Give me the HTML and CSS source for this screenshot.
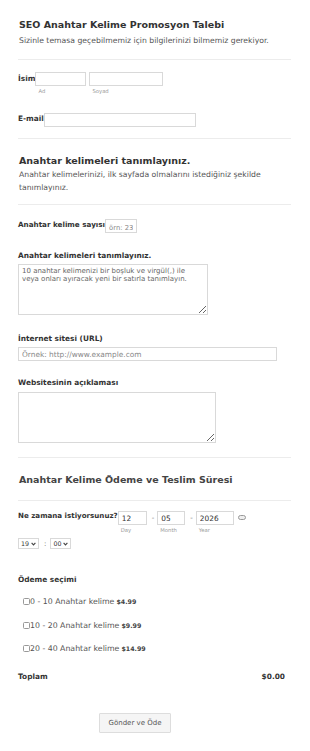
FILE: index.html
```html
<!DOCTYPE html>
<html lang="tr">
<head>
<meta charset="utf-8">
<link rel="stylesheet" href="styles.css">
</head>
<body>
<form class="form">
  <div class="head">
    <h1 class="title">SEO Anahtar Kelime Promosyon Talebi</h1>
    <p class="desc">Sizinle temasa geçebilmemiz için bilgilerinizi bilmemiz gerekiyor.</p>
  </div>
  <div class="rule"></div>

  <div class="row row-name">
    <label class="lbl">İsim</label>
    <div class="sub">
      <input class="in w-ad" type="text">
      <span class="hint">Ad</span>
    </div>
    <div class="sub">
      <input class="in w-soyad" type="text">
      <span class="hint">Soyad</span>
    </div>
  </div>

  <div class="row row-email">
    <label class="lbl">E-mail</label>
    <input class="in w-email" type="text">
  </div>
  <div class="rule rule-b"></div>

  <div class="head head-2">
    <h2 class="title">Anahtar kelimeleri tanımlayınız.</h2>
    <p class="desc">Anahtar kelimelerinizi, ilk sayfada olmalarını istediğiniz şekilde tanımlayınız.</p>
  </div>
  <div class="rule rule-c"></div>

  <div class="row row-count">
    <label class="lbl">Anahtar kelime sayısı</label>
    <input class="in w-count low" type="text" placeholder="örn: 23">
  </div>

  <div class="block block-kw">
    <label class="lbl">Anahtar kelimeleri tanımlayınız.</label>
    <textarea class="ta w-ta1" placeholder="10 anahtar kelimenizi bir boşluk ve virgül(,) ile veya onları ayıracak yeni bir satırla tanımlayın."></textarea>
  </div>

  <div class="block block-url">
    <label class="lbl">İnternet sitesi (URL)</label>
    <input class="in w-url" type="text" placeholder="Örnek: http://www.example.com">
  </div>

  <div class="block block-site">
    <label class="lbl">Websitesinin açıklaması</label>
    <textarea class="ta w-ta2"></textarea>
  </div>
  <div class="rule rule-d"></div>

  <div class="head head-3">
    <h2 class="title title-grey">Anahtar Kelime Ödeme ve Teslim Süresi</h2>
  </div>
  <div class="rule rule-e"></div>

  <div class="row row-date">
    <label class="lbl">Ne zamana istiyorsunuz?</label>
    <div class="sub">
      <input class="in w-day val" type="text" value="12">
      <span class="hint">Day</span>
    </div>
    <span class="dash">-</span>
    <div class="sub">
      <input class="in w-month val" type="text" value="05">
      <span class="hint">Month</span>
    </div>
    <span class="dash">-</span>
    <div class="sub">
      <input class="in w-year val" type="text" value="2026">
      <span class="hint">Year</span>
    </div>
    <svg class="cal" width="8" height="5" viewBox="0 0 8 5"><rect x="0.5" y="0.5" width="7" height="4" rx="2" fill="#eeeeee" stroke="#999" stroke-width="1"/></svg>
  </div>

  <div class="time">
    <span class="sel">19<svg width="5" height="4" viewBox="0 0 5 4"><path d="M0.6 0.8 L2.5 2.9 L4.4 0.8" fill="none" stroke="#444" stroke-width="1.1"/></svg></span>
    <span class="colon">:</span>
    <span class="sel">00<svg width="5" height="4" viewBox="0 0 5 4"><path d="M0.6 0.8 L2.5 2.9 L4.4 0.8" fill="none" stroke="#444" stroke-width="1.1"/></svg></span>
  </div>

  <div class="block block-pay">
    <label class="lbl">Ödeme seçimi</label>
    <ul class="opts">
      <li class="opt"><span class="cb"></span>0 - 10 Anahtar kelime <b class="price">$4.99</b></li>
      <li class="opt"><span class="cb"></span>10 - 20 Anahtar kelime <b class="price">$9.99</b></li>
      <li class="opt"><span class="cb"></span>20 - 40 Anahtar kelime <b class="price">$14.99</b></li>
    </ul>
  </div>

  <div class="total">
    <span class="lbl">Toplam</span>
    <span class="lbl">$0.00</span>
  </div>

  <div class="actions">
    <button class="btn" type="button">Gönder ve Öde</button>
  </div>
</form>
</body>
</html>
```

FILE: styles.css
```css
* { box-sizing: border-box; }
body {
  margin: 0;
  background: #fff;
  font-family: "DejaVu Sans", Verdana, sans-serif;
  color: #333;
}
.form {
  width: 310px;
  padding: 18px 19px 0 18px;
}
.head { padding-left: 1px; }
.title {
  margin: 0;
  font-size: 9.5px;
  line-height: 14px;
  font-weight: bold;
  color: #333;
}
.title-grey { color: #444; }
.desc {
  margin: 2px 0 0;
  font-size: 7.7px;
  line-height: 13px;
  color: #555;
}
.rule {
  height: 1px;
  background: #ececec;
  margin-top: 12px;
}
.lbl {
  font-size: 7.4px;
  font-weight: bold;
  color: #333;
  line-height: 10px;
  display: block;
}
.row { display: flex; align-items: flex-start; }
.row > .lbl { line-height: 12px; }
.sub { display: flex; flex-direction: column; margin-right: 3px; }
.hint {
  font-size: 5.3px;
  line-height: 8px;
  color: #999;
  padding-left: 3px;
  margin-top: 1px;
}
.in, .ta {
  display: block;
  border: 1px solid #d9d9d9;
  background: #fff;
  border-radius: 0;
  margin: 0;
  padding: 0 3px;
  font-family: "DejaVu Sans", Verdana, sans-serif;
  font-size: 7.4px;
  color: #555;
  height: 14px;
  outline: none;
}
.in::placeholder, .ta::placeholder { color: #888; opacity: 1; }
.ta::placeholder { color: #666; }
.row-name { margin-top: 12px; }
.row-name .lbl { margin-top: 1px; }
.w-ad { width: 51px; }
.w-soyad { width: 74px; }
.row-email { margin-top: 18px; }
.w-email { width: 152px; }
.rule-b { margin-top: 11px; }
.head-2 { margin-top: 15px; }
.head-2 .desc { margin-top: 0; }
.rule-c { margin-top: 10px; }
.row-count { margin-top: 14px; }
.row-count .lbl { font-size: 7.2px; }
.w-count { width: 32px; }
.low { padding-top: 4px; font-size: 6.8px; }
.block-kw { margin-top: 18px; }
.ta {
  height: 51px;
  padding: 2px 3px;
  resize: vertical;
  line-height: 8px;
  font-size: 7px;
  margin-top: 3px;
}
.w-ta1 { width: 190px; }
.w-ta2 { width: 198px; }
.block-url { margin-top: 19px; }
.w-url { width: 259px; margin-top: 3px; }
.block-site { margin-top: 17px; }
.block-site .ta { margin-top: 4px; }
.rule-d { margin-top: 14px; }
.head-3 { margin-top: 15px; }
.rule-e { margin-top: 13px; }
.row-date { margin-top: 10px; }
.row-date .lbl { margin-top: -1px; font-size: 7.1px; }
.val { color: #333; font-size: 7.4px; }
.w-day { width: 29px; }
.w-month { width: 28px; }
.w-year { width: 38px; }
.dash {
  font-size: 7px;
  line-height: 14px;
  color: #777;
  margin: 0 3px 0 2px;
}
.cal { margin: 4px 0 0 1px; }
.time {
  display: flex;
  align-items: center;
  margin-top: 4px;
}
.sel {
  display: inline-flex;
  align-items: center;
  gap: 2px;
  height: 11px;
  border: 1px solid #d9d9d9;
  padding: 0 2px;
  font-size: 6.3px;
  color: #333;
}
.colon { font-size: 7px; color: #555; margin: 0 4px 0 5px; }
.block-pay { margin-top: 26px; }
.opts {
  list-style: none;
  margin: 5px 0 0;
  padding: 0 0 0 5px;
}
.opt {
  display: flex;
  align-items: center;
  height: 23.5px;
  font-size: 7.8px;
  color: #555;
}
.cb {
  width: 7px;
  height: 7px;
  border: 1px solid #999;
  border-radius: 1.5px;
  background: #fff;
}
.price { font-size: 6.3px; color: #444; margin-left: 2px; }
.total {
  display: flex;
  justify-content: space-between;
  margin-top: 11px;
  padding-right: 6px;
}
.actions {
  display: flex;
  padding-left: 81px;
  margin-top: 31px;
}
.btn {
  width: 72px;
  height: 20px;
  background: #f5f5f5;
  border: 1px solid #dddddd;
  border-radius: 1px;
  font-family: "DejaVu Sans", Verdana, sans-serif;
  font-size: 7px;
  color: #555;
  padding: 0;
}
```
